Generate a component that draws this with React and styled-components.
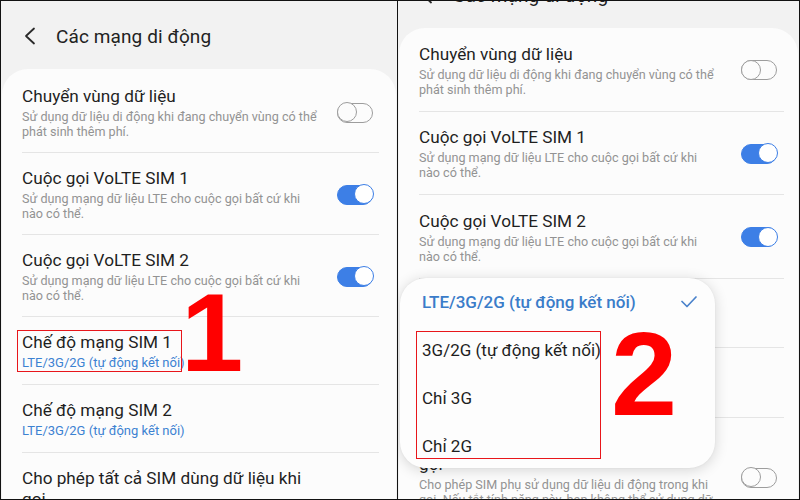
import React from 'react';
import styled, { createGlobalStyle } from 'styled-components';

const Global = createGlobalStyle`
  html, body { margin: 0; padding: 0; background: #000; }
  body { font-family: Roboto, "Noto Sans", "Liberation Sans", sans-serif; }
  * { box-sizing: border-box; }
`;

const Frame = styled.div`
  width: 800px;
  height: 500px;
  padding: 1px;
  gap: 1px;
  display: flex;
  background: #121212;
`;

const Panel = styled.div`
  position: relative;
  overflow: hidden;
  background: #f2f2f2;
  width: ${p => p.$w}px;
  flex: none;
  height: 498px;
`;

const Scroll = styled.div`
  margin-top: ${p => -p.$offset}px;
  display: flex;
  flex-direction: column;
`;

const Header = styled.header`
  height: 68px;
  display: flex;
  align-items: center;
  padding: 2px 0 0 23px;
  gap: 20px;
`;

const HeaderTitle = styled.h1`
  margin: 0;
  font-size: 19px;
  font-weight: 400;
  color: #222;
  letter-spacing: 0.1px;
`;

const Card = styled.section`
  background: #fcfcfc;
  border-radius: 26px 26px 0 0;
  margin: 0 ${p => p.$mx}px;
  padding-top: ${p => p.$pt}px;
  min-height: 600px;
`;

const Row = styled.div`
  padding: 0 ${p => p.$pr}px 0 20px;
`;

const RowBody = styled.div`
  display: flex;
  align-items: center;
  padding: ${p => p.$pt}px 0 ${p => p.$pb}px;
  border-bottom: 1px solid ${p => (p.$last ? 'transparent' : '#e5e5e5')};
`;

const TextCol = styled.div`
  flex: 1;
  min-width: 0;
  max-width: 296px;
`;

const Title = styled.div`
  font-size: 17.2px;
  line-height: 21px;
  color: #1f1f1f;
`;

const Sub = styled.div`
  margin-top: 2px;
  font-size: ${p => (p.$blue ? 13 : 12.6)}px;
  line-height: ${p => (p.$blue ? 16 : 15)}px;
  color: ${p => (p.$blue ? '#3c82d2' : '#939393')};
`;

const ToggleWrap = styled.div`
  flex: none;
  margin: 0 ${p => p.$mr}px 0 auto;
  width: 36px;
  height: 20px;
  position: relative;
  border-radius: 10px;
  background: ${p => (p.$on ? '#3d7fe6' : 'transparent')};
  border: 1.5px solid ${p => (p.$on ? '#3d7fe6' : '#9d9d9d')};
`;

const Knob = styled.span`
  position: absolute;
  top: -1.5px;
  ${p => (p.$on ? 'right: -1.5px;' : 'left: -1.5px;')}
  width: 20px;
  height: 20px;
  border-radius: 50%;
  background: ${p => (p.$on ? '#fff' : '#fcfcfc')};
  border: 1.5px solid ${p => (p.$on ? '#3d7fe6' : '#9d9d9d')};
`;

const Popup = styled.div`
  position: absolute;
  left: 2px;
  top: 277px;
  width: 315px;
  height: 190px;
  background: #fdfdfd;
  border-radius: 26px;
  box-shadow: 0 2px 14px rgba(0, 0, 0, 0.16), 0 0 2px rgba(0, 0, 0, 0.05);
  display: flex;
  flex-direction: column;
  padding: 0 18px 0 22px;
`;

const Option = styled.div`
  height: 48px;
  flex: none;
  display: flex;
  align-items: center;
  justify-content: space-between;
  font-size: 17px;
  font-weight: ${p => (p.$active ? 500 : 400)};
  color: ${p => (p.$active ? '#3a7cc9' : '#1e1e1e')};
`;

const MarkBox = styled.div`
  position: absolute;
  left: ${p => p.$x}px;
  top: ${p => p.$y}px;
  width: ${p => p.$w}px;
  height: ${p => p.$h}px;
  border: 1.5px solid #e8161b;
  pointer-events: none;
`;

const Digit = styled.div`
  position: absolute;
  left: ${p => p.$x}px;
  top: ${p => p.$y}px;
  font-family: "Liberation Sans", Arial, sans-serif;
  font-weight: 700;
  font-size: ${p => p.$size}px;
  line-height: 1;
  color: #ff0000;
  pointer-events: none;
`;

const Chevron = () => (
  <svg width="12" height="18" viewBox="0 0 12 18">
    <polyline points="10,1.5 2,9 10,16.5" fill="none" stroke="#2a2a2a" strokeWidth="1.8" strokeLinecap="round" strokeLinejoin="round" />
  </svg>
);

const CheckMark = () => (
  <svg width="16" height="12" viewBox="0 0 16 12">
    <polyline points="1,5.5 6,10.5 15,1" fill="none" stroke="#4a82cb" strokeWidth="1.7" strokeLinecap="round" strokeLinejoin="round" />
  </svg>
);

const Toggle = ({ on, mr }) => (
  <ToggleWrap $on={on} $mr={mr}>
    <Knob $on={on} />
  </ToggleWrap>
);

const rows = [
  { title: 'Chuyển vùng dữ liệu', sub: 'Sử dụng dữ liệu di động khi đang chuyển vùng có thể phát sinh thêm phí.', toggle: false },
  { title: 'Cuộc gọi VoLTE SIM 1', sub: 'Sử dụng mạng dữ liệu LTE cho cuộc gọi bất cứ khi nào có thể.', toggle: true },
  { title: 'Cuộc gọi VoLTE SIM 2', sub: 'Sử dụng mạng dữ liệu LTE cho cuộc gọi bất cứ khi nào có thể.', toggle: true },
  { title: 'Chế độ mạng SIM 1', sub: 'LTE/3G/2G (tự động kết nối)', blue: true },
  { title: 'Chế độ mạng SIM 2', sub: 'LTE/3G/2G (tự động kết nối)', blue: true },
  {
    title: 'Cho phép tất cả SIM dùng dữ liệu khi gọi',
    sub: 'Cho phép SIM phụ sử dụng dữ liệu di động trong khi gọi. Nếu tắt tính năng này, bạn không thể sử dụng dữ liệu di động khi đang gọi.',
    toggle: false,
  },
];

const Screen = ({ offset, mx, cardPt, pt, pb, pr, tmr }) => (
  <Scroll $offset={offset}>
    <Header>
      <Chevron />
      <HeaderTitle>Các mạng di động</HeaderTitle>
    </Header>
    <Card $mx={mx} $pt={cardPt}>
      {rows.map((r, i) => (
        <Row key={i} $pr={pr}>
          <RowBody $pt={pt} $pb={pb} $last={i === rows.length - 1}>
            <TextCol>
              <Title>{r.title}</Title>
              <Sub $blue={r.blue}>{r.sub}</Sub>
            </TextCol>
            {r.toggle !== undefined && <Toggle on={r.toggle} mr={tmr} />}
          </RowBody>
        </Row>
      ))}
    </Card>
  </Scroll>
);

export default function App() {
  return (
    <>
      <Global />
      <Frame>
        <Panel $w={396}>
          <Screen offset={0} mx={1} cardPt={2} pt={15} pb={13} pr={17} tmr={6} />
          <MarkBox $x={16} $y={329} $w={165} $h={42} />
          <Digit $x={180} $y={276} $size={112}>1</Digit>
        </Panel>
        <Panel $w={401}>
          <Screen offset={41} mx={1} cardPt={0} pt={15.5} pb={14} pr={14} tmr={7} />
          <Popup>
            <Option $active>
              <span>LTE/3G/2G (tự động kết nối)</span>
              <CheckMark />
            </Option>
            <Option>3G/2G (tự động kết nối)</Option>
            <Option>Chỉ 3G</Option>
            <Option>Chỉ 2G</Option>
          </Popup>
          <MarkBox $x={18} $y={330} $w={185} $h={128} />
          <Digit $x={213} $y={313} $size={119}>2</Digit>
        </Panel>
      </Frame>
    </>
  );
}
